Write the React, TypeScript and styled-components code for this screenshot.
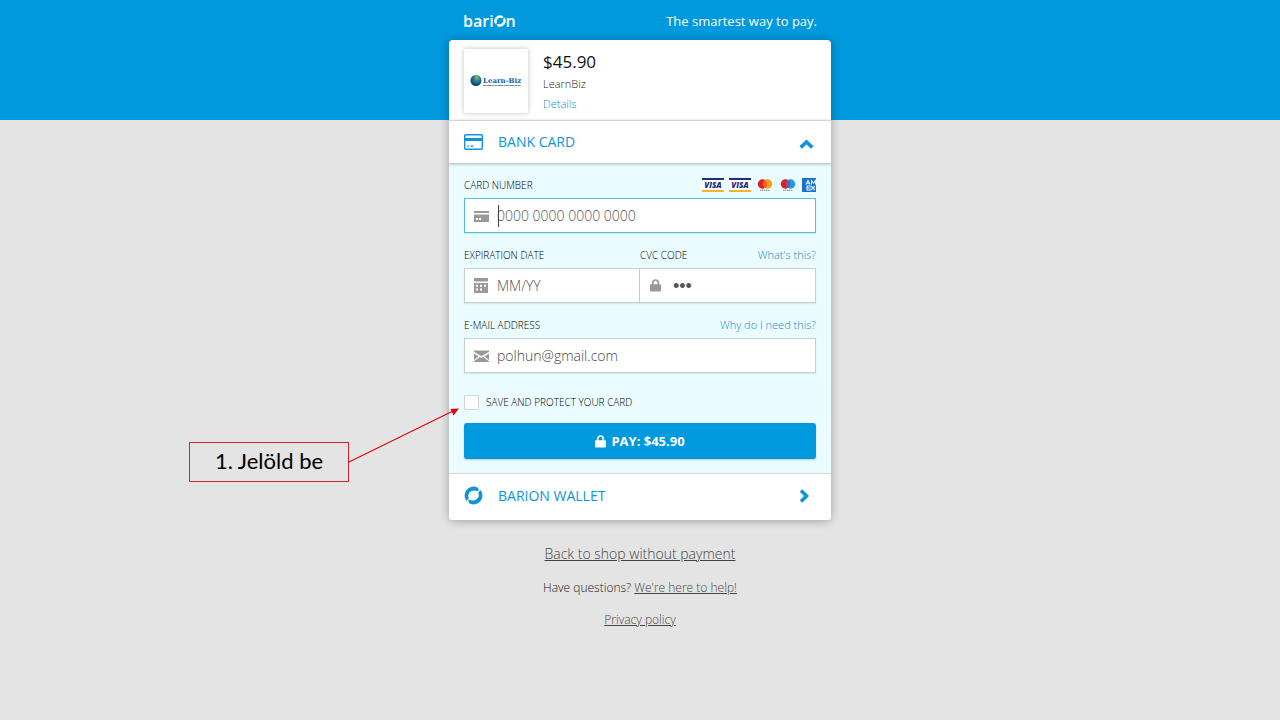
import React, { useState } from "react";
import styled, { createGlobalStyle } from "styled-components";

const blue = "#0099de";
const iconBlue = "#0d94d9";
const linkBlue = "#1787cc";

const GlobalStyle = createGlobalStyle`
  *, *::before, *::after { box-sizing: border-box; }
  body {
    margin: 0;
    font-family: "Open Sans", "Noto Sans", sans-serif;
    color: #222;
    background: #e4e4e4;
  }
`;

const Page = styled.div`
  display: flex;
  flex-direction: column;
  align-items: center;
  min-height: 100vh;
  background: linear-gradient(${blue} 120px, #e4e4e4 120px);
`;

const Column = styled.div`
  position: relative;
  width: 100%;
  max-width: 382px;
`;

const TopBar = styled.header`
  display: flex;
  align-items: center;
  justify-content: space-between;
  height: 40px;
  padding: 2px 14px 0;
  color: #fff;
`;

const Brand = styled.div`
  display: flex;
  align-items: center;
  font-size: 16px;
  font-weight: 600;
  line-height: 20px;
`;

const Tagline = styled.p`
  margin: 0;
  font-size: 13px;
`;

const Card = styled.main`
  border-radius: 4px;
  background: #fff;
  box-shadow: 0 1px 10px rgba(0, 0, 0, 0.3);
  overflow: hidden;
`;

const Summary = styled.section`
  display: flex;
  gap: 15px;
  height: 80px;
  padding: 9px 15px 0;
`;

const ShopLogo = styled.div`
  display: flex;
  align-items: center;
  justify-content: center;
  width: 64px;
  height: 64px;
  background: #fff;
  box-shadow: 0 0 5px rgba(0, 0, 0, 0.25);
`;

const SummaryText = styled.div`
  display: flex;
  flex-direction: column;
  align-items: flex-start;
  font-size: 11px;
  font-weight: 300;
  line-height: 20px;
`;

const Price = styled.strong`
  font-size: 17px;
  font-weight: 400;
  line-height: 25px;
  color: #111;
`;

const Link = styled.a`
  font-size: 11px;
  font-weight: 300;
  line-height: 20px;
  color: ${linkBlue};
  text-decoration: none;
`;

const Method = styled.button<{ $open?: boolean }>`
  position: relative;
  display: flex;
  align-items: center;
  width: 100%;
  height: ${(p) => (p.$open ? 43 : 47)}px;
  padding: 0 ${(p) => (p.$open ? 17 : 21)}px ${(p) => (p.$open ? 1 : 3)}px 15px;
  border: 0;
  border-top: 1px solid #cfd6d8;
  background: #fff;
  box-shadow: ${(p) => (p.$open ? "0 1px 3px rgba(0, 0, 0, 0.3)" : "none")};
  color: ${iconBlue};
  font: inherit;
  font-size: 14px;
  text-align: left;
  cursor: pointer;
`;

const MethodIcon = styled.span`
  display: flex;
  width: 34px;
`;

const MethodName = styled.span`
  flex: 1;
`;

const Form = styled.form`
  display: flex;
  flex-direction: column;
  gap: 11px;
  padding: 11px 15px 14px;
  background: #eafcff;
`;

const FieldRow = styled.div`
  display: grid;
  grid-template-columns: repeat(2, minmax(0, 1fr));
`;

const LabelRow = styled.div`
  display: flex;
  align-items: center;
  justify-content: space-between;
  height: 22px;
  margin-bottom: 2px;
`;

const Label = styled.label`
  font-size: 10px;
  font-weight: 300;
  color: #000;
`;

const Brands = styled.div`
  display: flex;
  align-items: center;
  gap: 5px;
`;

const InputBox = styled.div<{ $active?: boolean; $joined?: boolean }>`
  position: relative;
  display: flex;
  align-items: center;
  height: 35px;
  padding-left: ${(p) => (p.$joined ? 10 : 9)}px;
  border: 1px solid ${(p) => (p.$active ? "#4fc0dc" : "#c3cfd3")};
  border-left-width: ${(p) => (p.$joined ? 0 : 1)}px;
  background: #fff;
  box-shadow: 0 1px 1px rgba(0, 0, 0, 0.08);
`;

const InputIcon = styled.span`
  display: flex;
  flex: none;
  width: 23px;
`;

const Input = styled.input<{ $dots?: boolean }>`
  flex: 1;
  min-width: 0;
  padding: 0;
  border: 0;
  outline: 0;
  background: transparent;
  font-family: ${(p) => (p.$dots ? '"Liberation Sans", sans-serif' : "inherit")};
  font-size: ${(p) => (p.$dots ? 18 : 14)}px;
  font-weight: 300;
  line-height: 20px;
  color: #444;
  &::placeholder { color: #555; opacity: 1; }
`;

const Caret = styled.span`
  position: absolute;
  left: 33px;
  top: 6px;
  width: 1px;
  height: 22px;
  background: #444;
`;

const SaveRow = styled.label`
  display: flex;
  align-items: center;
  gap: 7px;
  height: 20px;
  margin: 8px 0 0;
  font-size: 10px;
  font-weight: 300;
  color: #000;
`;

const Checkbox = styled.input`
  appearance: none;
  width: 15px;
  height: 15px;
  margin: 0;
  border: 1px solid #ccd5d7;
  border-radius: 1px;
  background: #fff;
  &:checked { background: ${blue}; }
`;

const PayButton = styled.button`
  display: flex;
  align-items: center;
  justify-content: center;
  gap: 5px;
  height: 36px;
  border: 0;
  border-radius: 3px;
  background: ${blue};
  box-shadow: 0 1px 2px rgba(0, 0, 0, 0.2);
  color: #fff;
  font: inherit;
  font-size: 13px;
  font-weight: 700;
  cursor: pointer;
`;

const Footer = styled.footer`
  display: flex;
  flex-direction: column;
  align-items: center;
  gap: 12px;
  padding-top: 22px;
  font-size: 12px;
  font-weight: 300;
  line-height: 20px;
`;

const FooterLink = styled.a<{ $large?: boolean }>`
  font-size: ${(p) => (p.$large ? 14 : 12)}px;
  line-height: ${(p) => (p.$large ? 24 : 20)}px;
  color: #444;
`;

const Callout = styled.aside`
  position: absolute;
  left: -260px;
  top: 442px;
  width: 160px;
  height: 40px;
  border: 1px solid #d0232b;
  color: #000;
  font-family: Lato, "Open Sans", sans-serif;
  font-size: 22px;
  line-height: 36px;
  text-align: center;
`;

const Arrow = styled.svg`
  position: absolute;
  left: -101px;
  top: 404px;
`;

const RingMark = ({ size, color }: { size: number; color: string }) => (
  <svg width={size} height={size} viewBox="0 0 20 20" fill={color} aria-hidden="true">
    <path d="M2.600 15.800A9.400 9.400 0 0 1 14.600 1.800L15.800 5.200 12.300 5.100A5.800 5.800 0 0 0 5 12.800z" />
    <path d="M17.400 4.200A9.400 9.400 0 0 1 5.400 18.200L4.200 14.800 7.700 14.900A5.800 5.800 0 0 0 15 7.200z" />
  </svg>
);

const Lock = ({ color }: { color: string }) => (
  <svg width="11" height="13" viewBox="0 0 11 13" aria-hidden="true">
    <path d="M2.7 6V3.8a2.8 2.8 0 0 1 5.6 0V6" fill="none" stroke={color} strokeWidth="1.7" />
    <rect y="5.3" width="11" height="7.2" rx="1" fill={color} />
  </svg>
);

const LearnBizMark = () => (
  <svg width="53" height="14" viewBox="0 0 53 14" role="img" aria-label="Learn-Biz">
    <defs>
      <radialGradient id="globe" cx="0.6" cy="0.3" r="0.8">
        <stop offset="0" stopColor="#6fb08a" />
        <stop offset="0.45" stopColor="#1d7196" />
        <stop offset="1" stopColor="#082c50" />
      </radialGradient>
    </defs>
    <circle cx="6" cy="6.500" r="5.5" fill="url(#globe)" />
    <path d="M4 1.500q2 1 1 3l2 0 2-3q-2-1.500-5 0z" fill="#8eb955" opacity="0.7" />
    <text x="13" y="8.500" fontFamily="DejaVu Serif, serif" fontWeight="700" fontSize="7" fill="#14649b">Learn-Biz</text>
    <path d="M13 11.500h38" stroke="#3a6384" strokeWidth="1.200" strokeDasharray="3 .5 5 .5 2 .5" opacity="0.75" />
  </svg>
);

const Visa = () => (
  <svg width="22" height="14" viewBox="0 0 22 14" role="img" aria-label="Visa">
    <rect width="22" height="14" fill="#fff" />
    <rect width="22" height="2" fill="#1f2f78" />
    <rect y="12" width="22" height="2" fill="#f5b32d" />
    <text x="11" y="10" textAnchor="middle" fontFamily="Open Sans, sans-serif" fontStyle="italic" fontWeight="800" fontSize="8" fill="#1f2f78">VISA</text>
  </svg>
);

const Circles = ({ left, right, mid }: { left: string; right: string; mid: string }) => (
  <svg width="18" height="14" viewBox="0 0 18 14" aria-hidden="true">
    <circle cx="6.500" cy="6" r="4.700" fill={left} />
    <circle cx="11.500" cy="6" r="4.700" fill={right} />
    <path d="M9 2a4.700 4.700 0 0 1 0 8a4.700 4.700 0 0 1 0-8z" fill={mid} />
    <path d="M4 12.300h10" stroke="#555" strokeDasharray="1.500 .5" opacity="0.7" />
  </svg>
);

const Amex = () => (
  <svg width="14" height="14" viewBox="0 0 14 14" role="img" aria-label="American Express">
    <rect width="14" height="14" fill="#1c74c8" />
    <g fill="none" stroke="#e6f3ff" strokeWidth="1.100">
      <path d="M4 6.500l2-4 2 4M5 5.300h2M9.500 6.500v-4l2 2.500 2-2.500v4" />
      <path d="M9 8H5v4h4M5 10h3.500M9 8l4 4M13 8l-4 4" />
    </g>
  </svg>
);

export default function App() {
  const [save, setSave] = useState(false);
  return (
    <Page>
      <GlobalStyle />
      <Column>
        <TopBar>
          <Brand>bari<RingMark size={12} color="#fff" />n</Brand>
          <Tagline>The smartest way to pay.</Tagline>
        </TopBar>
        <Card>
          <Summary>
            <ShopLogo><LearnBizMark /></ShopLogo>
            <SummaryText>
              <Price>$45.90</Price>
              <span>LearnBiz</span>
              <Link href="#details">Details</Link>
            </SummaryText>
          </Summary>
          <Method type="button" $open aria-expanded="true">
            <MethodIcon>
              <svg width="19" height="16" viewBox="0 0 19 16" aria-hidden="true">
                <rect x=".7" y=".7" width="17.600" height="14.600" rx="1" fill="none" stroke={iconBlue} strokeWidth="1.400" />
                <path d="M1 5.500h17" stroke={iconBlue} strokeWidth="3" />
                <path d="M3 12.200h2M6.500 12.200h3" stroke={iconBlue} strokeWidth="1.300" />
              </svg>
            </MethodIcon>
            <MethodName>BANK CARD</MethodName>
            <svg width="15" height="14" viewBox="0 0 15 14" fill="none" stroke={iconBlue} strokeWidth="3.600" aria-hidden="true">
              <path d="M1.700 12.500l5.800-5.600 5.800 5.600" />
            </svg>
          </Method>
          <Form onSubmit={(e) => e.preventDefault()}>
            <div>
              <LabelRow>
                <Label htmlFor="number">CARD NUMBER</Label>
                <Brands>
                  <Visa />
                  <Visa />
                  <Circles left="#e31b23" right="#f79e1b" mid="#f4641f" />
                  <Circles left="#e31b23" right="#1b9ddb" mid="#7357a5" />
                  <Amex />
                </Brands>
              </LabelRow>
              <InputBox $active>
                <InputIcon>
                  <svg width="15" height="12" viewBox="0 0 15 12" fill="#999" aria-hidden="true">
                    <path d="M0 1h15v2H0zM0 4.500h15V12H0zM2 8v2h2V8zM5 8v2h2V8z" fillRule="evenodd" />
                  </svg>
                </InputIcon>
                <Input id="number" placeholder="0000 0000 0000 0000" />
                <Caret />
              </InputBox>
            </div>
            <FieldRow>
              <div>
                <LabelRow><Label htmlFor="expiry">EXPIRATION DATE</Label></LabelRow>
                <InputBox>
                  <InputIcon>
                    <svg width="14" height="15" viewBox="0 0 14 15" fill="#999" aria-hidden="true">
                      <path d="M0 0h14v3.500H0zM0 5h14v10H0zM2 6.800v2h2v-2zM6 6.800v2h2v-2zM10 6.800v2h2v-2zM2 10.500v2h2v-2zM6 10.500v2h2v-2z" fillRule="evenodd" />
                    </svg>
                  </InputIcon>
                  <Input id="expiry" placeholder="MM/YY" />
                </InputBox>
              </div>
              <div>
                <LabelRow>
                  <Label htmlFor="cvc">CVC CODE</Label>
                  <Link href="#cvc-help">What's this?</Link>
                </LabelRow>
                <InputBox $joined>
                  <InputIcon><Lock color="#999" /></InputIcon>
                  <Input id="cvc" placeholder="•••" $dots />
                </InputBox>
              </div>
            </FieldRow>
            <div>
              <LabelRow>
                <Label htmlFor="email">E-MAIL ADDRESS</Label>
                <Link href="#email-help">Why do I need this?</Link>
              </LabelRow>
              <InputBox>
                <InputIcon>
                  <svg width="15" height="12" viewBox="0 0 15 12" fill="#999" aria-hidden="true">
                    <path d="M0 0.500h15v1.300L7.500 6.200 0 1.800zM0 3.600l4.600 2.800L0 10zM15 3.600l-4.600 2.800L15 10zM0 12v-.8l5.800-4.200 1.700 1 1.700-1 5.800 4.200v.8z" />
                  </svg>
                </InputIcon>
                <Input id="email" type="email" defaultValue="polhun@gmail.com" />
              </InputBox>
            </div>
            <SaveRow>
              <Checkbox type="checkbox" checked={save} onChange={(e) => setSave(e.target.checked)} />
              SAVE AND PROTECT YOUR CARD
            </SaveRow>
            <PayButton type="submit"><Lock color="#fff" />PAY: $45.90</PayButton>
          </Form>
          <Method type="button" aria-expanded="false">
            <MethodIcon><RingMark size={19} color={iconBlue} /></MethodIcon>
            <MethodName>BARION WALLET</MethodName>
            <svg width="11" height="14" viewBox="0 0 11 14" fill="none" stroke={iconBlue} strokeWidth="3.600" aria-hidden="true">
              <path d="M2 1.500l5.500 5.500L2 12.500" />
            </svg>
          </Method>
        </Card>
        <Footer>
          <FooterLink href="#back" $large>Back to shop without payment</FooterLink>
          <span>Have questions? <FooterLink href="#help">We're here to help!</FooterLink></span>
          <FooterLink href="#privacy">Privacy policy</FooterLink>
        </Footer>
        <Callout>1. Jelöld be</Callout>
        <Arrow width="112" height="60" viewBox="0 0 112 60" aria-hidden="true">
          <path d="M1 58L105 7" stroke="#e3000f" strokeWidth="1.100" />
          <path d="M111 4.500l-5.500 7-3-6.500z" fill="#e3000f" />
        </Arrow>
      </Column>
    </Page>
  );
}
